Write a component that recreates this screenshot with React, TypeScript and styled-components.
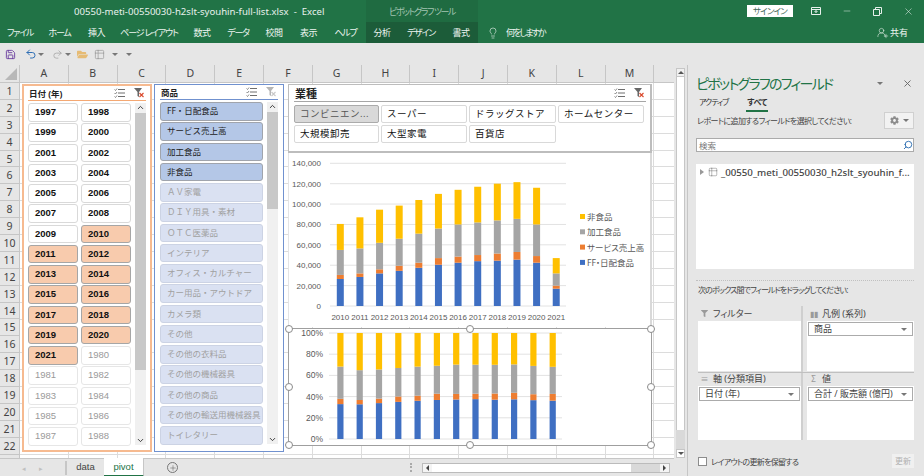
import React from 'react';
import styled, { createGlobalStyle } from 'styled-components';
import { ChevronDown, ChevronUp, Lightbulb, Minus, Redo2, Save, Search, Table2, Undo2, UserRound, X, Plus } from 'lucide-react';
import { FaCog, FaFilter, FaFolderOpen } from 'react-icons/fa';

const UI_FONT = `"Noto Sans", "Noto Sans CJK JP", sans-serif`;
const NUM_FONT = `"Liberation Sans", "Noto Sans CJK JP", sans-serif`;

const GlobalStyle = createGlobalStyle`
  html, body { margin: 0; padding: 0; background: #e6e6e6; overflow: hidden; }
  * { box-sizing: border-box; }
  body { font-family: ${UI_FONT}; font-feature-settings: "palt"; }
`;

const Window = styled.div`
  width: 924px;
  height: 476px;
  display: flex;
  flex-direction: column;
  overflow: hidden;
`;

// title bar
const TitleBar = styled.div`
  height: 22px;
  background: #217346;
  display: flex;
  align-items: center;
  color: #e8f1ec;
  position: relative;
`;

const DocTitle = styled.div`
  margin-left: 74px;
  width: 292px;
  font-size: 9.6px;
  white-space: pre;
`;

const ContextGroup = styled.div`
  width: 112px;
  height: 22px;
  background: #1f6b41;
  color: #a3c4b1;
  font-size: 9px;
  letter-spacing: -1.5px;
  display: flex;
  align-items: center;
  justify-content: center;
`;

const WindowControls = styled.div`
  margin-left: auto;
  display: flex;
  align-items: center;
  height: 22px;
`;

const SignIn = styled.div`
  width: 46px;
  height: 12px;
  background: #fff;
  color: #44695a;
  font-size: 8.5px;
  letter-spacing: -0.8px;
  line-height: 12px;
  text-align: center;
  margin-right: 7px;
`;

const WinButton = styled.div`
  width: 31px;
  display: flex;
  justify-content: center;
  color: #e8f1ec;
`;

const RibbonTabs = styled.div`
  height: 21px;
  background: #217346;
  display: flex;
  align-items: center;
  color: #eef5f1;
  font-size: 9px;
`;

const RibbonTab = styled.div<{ $w: number; $dark?: boolean; $kana?: boolean }>`
  width: ${p => p.$w}px;
  height: 21px;
  line-height: 21px;
  text-align: center;
  white-space: nowrap;
  flex: none;
  letter-spacing: ${p => (p.$kana ? -1.2 : -0.5)}px;
  background: ${p => (p.$dark ? '#1c5c39' : 'transparent')};
`;

const TellMe = styled.div`
  display: flex;
  align-items: center;
  gap: 7px;
  margin-left: 9px;
  letter-spacing: -1.9px;
`;

const Share = styled.div`
  margin-left: auto;
  margin-right: 16px;
  display: flex;
  align-items: center;
  gap: 3px;
  position: relative;
`;

const SharePlus = styled.span`
  position: absolute;
  left: 7px;
  top: 7px;
  display: flex;
`;

const Qat = styled.div`
  height: 22px;
  background: #e6e6e6;
  display: flex;
  align-items: center;
  padding-left: 5px;
`;

const QatIcon = styled.div<{ $w: number }>`
  width: ${p => p.$w}px;
  display: flex;
  align-items: center;
  color: #8a8a8a;
  flex: none;
`;

const Main = styled.div`
  flex: 1;
  display: flex;
  min-height: 0;
`;

// sheet
const SheetPane = styled.div`
  width: 687px;
  display: flex;
  flex-direction: column;
`;

const SheetTop = styled.div`
  height: 393px;
  display: flex;
`;

const SheetBody = styled.div`
  width: 674px;
  display: flex;
  flex-direction: column;
`;

const ColumnHeader = styled.div`
  height: 18px;
  display: flex;
  background: #e6e6e6;
  border-bottom: 1px solid #c6c6c6;
`;

const Corner = styled.div`
  width: 20px;
  flex: none;
  position: relative;
  border-right: 1px solid #c6c6c6;
  &::after {
    content: '';
    position: absolute;
    right: 2px;
    bottom: 2px;
    border-style: solid;
    border-width: 0 0 12px 12px;
    border-color: transparent transparent #b8b8b8 transparent;
  }
`;

const ColumnCell = styled.div`
  width: 48.8px;
  flex: none;
  text-align: center;
  font-size: 10.5px;
  line-height: 17px;
  color: #444;
  border-right: 1px solid #c6c6c6;
`;

const GridRow = styled.div`
  flex: 1;
  display: flex;
  min-height: 0;
`;

const RowHeader = styled.div`
  width: 20px;
  flex: none;
  background: #e6e6e6;
  overflow: hidden;
  border-right: 1px solid #c6c6c6;
`;

const RowCell = styled.div`
  height: 16.9px;
  line-height: 16px;
  text-align: center;
  font-size: 10.5px;
  color: #444;
  border-bottom: 1px solid #c6c6c6;
`;

const Cells = styled.div`
  flex: 1;
  position: relative;
  background-color: #fff;
  background-image:
    repeating-linear-gradient(to right, transparent 0, transparent 47.8px, #dcdcdc 47.8px, #dcdcdc 48.8px),
    repeating-linear-gradient(to bottom, transparent 0, transparent 15.9px, #dcdcdc 15.9px, #dcdcdc 16.9px);
`;

const FloatLayer = styled.div`
  position: absolute;
  left: 2px;
  top: 1px;
  display: flex;
  gap: 2px;
`;

const Slicer = styled.div<{ $accent: string; $border: number }>`
  width: 130px;
  height: 368px;
  background: #fff;
  border: ${p => p.$border}px solid ${p => p.$accent};
  padding: 0 ${p => 6 - p.$border}px;
  display: flex;
  flex-direction: column;
`;

const SlicerHead = styled.div<{ $accent: string; $big?: boolean }>`
  height: ${p => (p.$big ? 17 : 15)}px;
  flex: none;
  display: flex;
  align-items: center;
  border-bottom: 1px solid ${p => p.$accent};
  font-size: ${p => (p.$big ? 11 : 8.5)}px;
  font-weight: 700;
  color: #222;
  padding-left: 1px;
`;

const HeadTools = styled.div`
  margin-left: auto;
  display: flex;
  align-items: center;
  gap: 9px;
  padding-right: 1px;
`;

const SlicerBody = styled.div`
  flex: 1;
  display: flex;
  margin-top: 2px;
  min-height: 0;
`;

const ItemGrid = styled.div<{ $cols: number }>`
  width: 103px;
  height: 343px;
  overflow: hidden;
  display: grid;
  grid-template-columns: repeat(${p => p.$cols}, 1fr);
  grid-auto-rows: 18.5px;
  gap: 1.75px 3px;
  align-content: start;
`;

type Tone = 'off' | 'none' | 'orange' | 'blue' | 'blueNone' | 'grey';

const toneBg: Record<Tone, string> = {
  off: '#fff', none: '#fff', orange: '#f8cbad', blue: '#b4c7e7', blueNone: '#dae1f2', grey: '#d9d9d9',
};
const toneLine: Record<Tone, string> = {
  off: '#d9d9d9', none: '#e6e6e6', orange: '#a6a6a6', blue: '#a0a4ac', blueNone: '#ccd3e4', grey: '#ababab',
};
const toneText: Record<Tone, string> = {
  off: '#111', none: '#9a9a9a', orange: '#111', blue: '#222', blueNone: '#a0a0a0', grey: '#555',
};

const SlicerItem = styled.div<{ $tone: Tone; $year?: boolean }>`
  background: ${p => toneBg[p.$tone]};
  border: 1px solid ${p => toneLine[p.$tone]};
  border-radius: 3px;
  color: ${p => toneText[p.$tone]};
  font-family: ${p => (p.$year ? NUM_FONT : UI_FONT)};
  font-weight: ${p => (p.$year && p.$tone !== 'none' ? 700 : 400)};
  font-size: ${p => (p.$year ? 9.5 : 8.5)}px;
  font-feature-settings: normal;
  line-height: 16px;
  padding-left: 6px;
  white-space: nowrap;
  overflow: hidden;
`;

const SlicerScroll = styled.div`
  width: 11px;
  height: 342px;
  margin-left: 4px;
  flex: none;
  background: #f0f0f0;
  display: flex;
  flex-direction: column;
  align-items: center;
  color: #333;
`;

const ScrollThumb = styled.div<{ $h: number }>`
  width: 100%;
  height: ${p => p.$h}px;
  background: #c8c8c8;
  margin-top: 1px;
`;

const ScrollSpring = styled.div`
  flex: 1;
`;

const RightColumn = styled.div`
  width: 364px;
  margin-left: 2px;
  display: flex;
  flex-direction: column;
`;

const IndustrySlicer = styled.div`
  width: 364px;
  height: 69px;
  background: #fff;
  border: 1px solid #bdbdbd;
  border-width: 1px 2px 2px 1px;
  padding: 0 4px 0 5px;
`;

const IndustryGrid = styled.div`
  display: grid;
  grid-template-columns: 85px 86px 87px 86px;
  grid-auto-rows: 18px;
  gap: 2px 2px;
  margin-top: 3px;
`;

const IndustryItem = styled.div<{ $tone: Tone }>`
  background: ${p => toneBg[p.$tone]};
  border: 1px solid ${p => toneLine[p.$tone]};
  border-radius: 2px;
  color: ${p => toneText[p.$tone]};
  font-size: 9.5px;
  font-feature-settings: normal;
  letter-spacing: 0.5px;
  line-height: 16px;
  padding-left: 5px;
  white-space: nowrap;
  overflow: hidden;
`;

const ChartTop = styled.div`
  width: 364px;
  height: 174px;
  background: #fff;
  border-right: 2px solid #d9d9d9;
  border-left: 1px solid #e4e4e4;
`;

const ChartSelected = styled.div`
  width: 364px;
  height: 118px;
  margin-top: 1px;
  background: #fff;
  border: 1px solid #9f9f9f;
  position: relative;
`;

const Handle = styled.div<{ $x: number; $y: number }>`
  position: absolute;
  left: ${p => p.$x}%;
  top: ${p => p.$y}%;
  width: 8px;
  height: 8px;
  margin: -4px 0 0 -4px;
  border-radius: 50%;
  background: #fff;
  border: 1px solid #8a8a8a;
`;

const ChartSvg = styled.svg`
  display: block;
  font-family: ${NUM_FONT};
`;

const VScroll = styled.div`
  width: 9px;
  height: 390px;
  margin: 3px 0 0 2px;
  display: flex;
  flex-direction: column;
  background: #d9d9d9;
`;

const VArrow = styled.div`
  height: 9px;
  background: #f0f0f0;
  flex: none;
  display: flex;
  align-items: center;
  justify-content: center;
  border: 1px solid #c6c6c6;
  &::after {
    content: '';
    border-style: solid;
    border-color: #555 transparent;
    border-width: 0 3px 3px 3px;
  }
`;

const VArrowDown = styled(VArrow)`
  background: #fff;
  &::after { border-width: 3px 3px 0 3px; }
`;

const VThumb = styled.div`
  height: 353px;
  background: #fff;
  flex: none;
  border-left: 1px solid #c6c6c6;
  border-right: 1px solid #c6c6c6;
`;

// sheet tabs
const TabBar = styled.div`
  flex: 1;
  display: flex;
  align-items: stretch;
  background: #e6e6e6;
  border-top: 1px solid #c6c6c6;
  width: 674px;
  position: relative;
`;

const TabNav = styled.div`
  width: 67px;
  flex: none;
  display: flex;
  align-items: center;
  justify-content: center;
  gap: 13px;
  color: #c0c0c0;
  font-size: 7px;
  border-right: 2px solid #c6c6c6;
  margin: 2px 0;
`;

const SheetTab = styled.div<{ $active?: boolean }>`
  width: ${p => (p.$active ? 40 : 37)}px;
  text-align: center;
  font-family: ${NUM_FONT};
  font-size: 9.5px;
  line-height: 17px;
  margin-top: -1px;
  color: ${p => (p.$active ? '#217346' : '#444')};
  background: ${p => (p.$active ? '#fff' : 'transparent')};
  border-bottom: ${p => (p.$active ? '2px solid #217346' : 'none')};
  border-right: ${p => (p.$active ? '1px solid #c6c6c6' : 'none')};
`;

const AddSheet = styled.div`
  width: 11px;
  height: 11px;
  margin: 3px 0 0 23px;
  border: 1px solid #777;
  border-radius: 50%;
  color: #555;
  display: flex;
  align-items: center;
  justify-content: center;
`;

const Dots = styled.div`
  margin: 4px 0 0 232px;
  width: 1px;
  height: 9px;
  border-left: 2px dotted #aaa;
`;

const HScroll = styled.div`
  margin: 4px 0 0 10px;
  width: 248px;
  height: 10px;
  display: flex;
  background: #d9d9d9;
  border: 1px solid #bbb;
`;

const HArrow = styled.div<{ $right?: boolean }>`
  width: 9px;
  flex: none;
  background: #f4f4f4;
  display: flex;
  align-items: center;
  justify-content: center;
  ${p => (p.$right ? 'margin-left: auto;' : '')}
  &::after {
    content: '';
    border-style: solid;
    border-color: transparent #444;
    border-width: ${p => (p.$right ? '3px 0 3px 3px' : '3px 3px 3px 0')};
  }
`;

const HThumb = styled.div`
  width: 199px;
  background: #fff;
  flex: none;
`;

// field panel
const Panel = styled.aside`
  width: 237px;
  background: #e6e6e6;
  border-left: 1px solid #c6c6c6;
  padding: 0 10px 0 8px;
  display: flex;
  flex-direction: column;
`;

const PanelHead = styled.div`
  display: flex;
  align-items: center;
  height: 26px;
  margin-top: 5px;
`;

const PanelTitle = styled.div`
  color: #217346;
  font-size: 14px;
  letter-spacing: -1.7px;
  white-space: nowrap;
`;

const PanelTools = styled.div`
  margin-left: auto;
  display: flex;
  align-items: center;
  gap: 19px;
  color: #666;
  margin-right: 1px;
`;

const CaretDown = styled.span`
  display: inline-block;
  border-style: solid;
  border-color: #777 transparent;
  border-width: 3px 3.5px 0 3.5px;
`;

const PanelTabs = styled.div`
  display: flex;
  font-size: 8px;
  color: #333;
  height: 15px;
  margin-top: -1px;
`;

const PanelTab = styled.div<{ $active?: boolean }>`
  margin-left: ${p => (p.$active ? 17 : 2)}px;
  padding: 0 1px;
  height: 17px;
  letter-spacing: ${p => (p.$active ? -0.5 : -1)}px;
  font-weight: ${p => (p.$active ? 700 : 400)};
  border-bottom: ${p => (p.$active ? '2px solid #217346' : 'none')};
  line-height: 13px;
`;

const ChooseRow = styled.div`
  display: flex;
  align-items: center;
  justify-content: space-between;
  height: 17px;
  margin-top: 2px;
  font-size: 8px;
  letter-spacing: -0.6px;
  white-space: nowrap;
  color: #444;
  padding-left: 1px;
`;

const GearButton = styled.div`
  width: 30px;
  height: 17px;
  background: #f2f2f2;
  border: 1px solid #d0d0d0;
  display: flex;
  align-items: center;
  justify-content: center;
  gap: 4px;
  color: #8c8c8c;
`;

const SearchBox = styled.div`
  height: 14px;
  margin-top: 9px;
  background: #fff;
  border: 1px solid #ababab;
  font-size: 8.5px;
  line-height: 11px;
  color: #777;
  padding-left: 2px;
  display: flex;
  align-items: center;
  justify-content: space-between;
`;

const SearchMark = styled.span`
  display: flex;
  transform: scaleX(-1);
  color: #2b6cb0;
  margin-left: 1px;
`;

const FieldList = styled.div`
  height: 105px;
  margin-top: 12px;
  background: #fff;
  padding: 1px 4px;
  font-size: 9.7px;
  font-weight: 500;
  color: #444;
`;

const ExpandMark = styled.span`
  display: inline-block;
  border-style: solid;
  border-color: transparent #999;
  border-width: 3px 0 3px 4px;
  flex: none;
  margin-right: 1px;
`;

const FieldRow = styled.div`
  display: flex;
  align-items: center;
  gap: 3px;
  height: 12px;
  margin-top: 1px;
  white-space: nowrap;
`;

const Splitter = styled.div`
  margin-top: 11px;
  border-top: 1px dotted #c0c0c0;
`;

const DragHint = styled.div`
  font-size: 8px;
  letter-spacing: -0.9px;
  white-space: nowrap;
  color: #444;
  margin-top: 2px;
  height: 14px;
  line-height: 14px;
  padding-left: 2px;
`;

const AreaGrid = styled.div`
  margin-top: 9px;
  padding-left: 2px;
  display: grid;
  grid-template-columns: 103px 107px;
  grid-template-rows: 65px 69px;
  column-gap: 6px;
  position: relative;
`;

const AreaCell = styled.div`
  display: flex;
  flex-direction: column;
`;

const AreaLabel = styled.div`
  height: 15px;
  display: flex;
  align-items: center;
  gap: 5px;
  font-size: 9px;
  color: #444;
  padding-left: 3px;
`;

const AreaIcon = styled.span`
  width: 7px;
  display: flex;
  justify-content: center;
  color: #9a9a9a;
  font-size: 8px;
  line-height: 9px;
`;

const AreaBox = styled.div`
  flex: 1;
  background: #fff;
  padding: 1px;
`;

const Pill = styled.div`
  height: 14px;
  border: 1px solid #ababab;
  background: #fff;
  font-size: 9px;
  line-height: 12px;
  color: #444;
  padding: 0 5px;
  display: flex;
  align-items: center;
  justify-content: space-between;
`;

const VSplit = styled.div`
  position: absolute;
  left: 105px;
  top: 0;
  bottom: 0;
  width: 2px;
  background: #cfcfcf;
`;

const HSplit = styled.div`
  position: absolute;
  left: 2px;
  right: 0;
  top: 66px;
  height: 1px;
  background: #c0c0c0;
`;

const PanelFoot = styled.div`
  display: flex;
  align-items: center;
  margin-top: 14px;
  font-size: 8px;
  letter-spacing: -0.7px;
  color: #444;
  padding-left: 2px;
`;

const CheckBox = styled.div`
  width: 9px;
  height: 9px;
  background: #fff;
  border: 1px solid #8c8c8c;
  margin-right: 4px;
`;

const UpdateButton = styled.div`
  margin-left: auto;
  width: 22px;
  height: 14px;
  line-height: 14px;
  text-align: center;
  background: #f0f0f0;
  color: #b0b0b0;
  letter-spacing: 0;
`;

const years = [1997, 1998, 1999, 2000, 2001, 2002, 2003, 2004, 2005, 2006, 2007, 2008, 2009, 2010, 2011, 2012, 2013, 2014, 2015, 2016, 2017, 2018, 2019, 2020, 2021, 1980, 1981, 1982, 1983, 1984, 1985, 1986, 1987, 1988];

const products = ['FF・日配食品', 'サービス売上高', '加工食品', '非食品', 'ＡＶ家電', 'ＤＩＹ用具・素材', 'ＯＴＣ医薬品', 'インテリア', 'オフィス・カルチャー', 'カー用品・アウトドア', 'カメラ類', 'その他', 'その他の衣料品', 'その他の機械器具', 'その他の商品', 'その他の輸送用機械器具', 'トイレタリー'];

const industries = ['コンビニエン...', 'スーパー', 'ドラッグストア', 'ホームセンター', '大規模卸売', '大型家電', '百貨店'];

const ribbon: { name: string; w: number; kana?: boolean; dark?: boolean }[] = [
  { name: 'ファイル', w: 40, kana: true },
  { name: 'ホーム', w: 39, kana: true },
  { name: '挿入', w: 35 },
  { name: 'ページ レイアウト', w: 70, kana: true },
  { name: '数式', w: 36 },
  { name: 'データ', w: 36, kana: true },
  { name: '校閲', w: 36 },
  { name: '表示', w: 33 },
  { name: 'ヘルプ', w: 41, kana: true },
  { name: '分析', w: 32, dark: true },
  { name: 'デザイン', w: 46, kana: true, dark: true },
  { name: '書式', w: 34, dark: true },
];

const COLORS = ['#3f6fc2', '#ed7d31', '#a5a5a5', '#ffc000'];
const SERIES_NAMES = ['FF・日配食品', 'サービス売上高', '加工食品', '非食品'];

// cumulative tops per year, in thousands
const stacks = [
  [26.5, 30.5, 55, 80.5], [28.5, 32, 56.5, 87], [32, 36, 62, 94.5], [34.5, 39.5, 66, 98.5],
  [37.5, 42.5, 71, 104], [40.5, 47, 76, 110], [42.5, 48.5, 80, 114], [44, 50, 82, 117],
  [44.5, 51.5, 84, 120], [45.5, 53, 85.5, 121.5], [42.5, 49, 80, 116], [17, 20, 32, 47],
];

const AbsoluteChart = () => {
  const base = 153;
  const unit = 142.7 / 140;
  return (
    <ChartSvg width={361} height={174}>
      {[0, 20, 40, 60, 80, 100, 120, 140].map(v => {
        const y = base - v * unit;
        return (
          <g key={v}>
            <line x1={41} x2={277} y1={y} y2={y} stroke="#e2e2e2" strokeWidth={1} />
            <text x={32} y={y + 3} textAnchor="end" fontSize={8} fill="#595959">
              {v === 0 ? '0' : `${v},000`}
            </text>
          </g>
        );
      })}
      {stacks.map((s, i) => {
        const x = 47.8 + i * 19.63;
        return (
          <g key={i}>
            {s.map((top, k) => {
              const from = k === 0 ? 0 : s[k - 1];
              return <rect key={k} x={x} width={7} y={base - top * unit} height={(top - from) * unit} fill={COLORS[k]} />;
            })}
            <text x={x + 3.5} y={167} textAnchor="middle" fontSize={8} fill="#595959">{2010 + i}</text>
          </g>
        );
      })}
      {[3, 2, 1, 0].map((k, i) => (
        <g key={k}>
          <rect x={291} y={61 + i * 15.3} width={5} height={5} fill={COLORS[k]} />
          <text x={298} y={67 + i * 15.3} fontSize={8.5} fill="#595959" fontFamily={UI_FONT}>{SERIES_NAMES[k]}</text>
        </g>
      ))}
    </ChartSvg>
  );
};

const PercentChart = () => {
  const base = 110;
  const unit = 1.06;
  return (
    <ChartSvg width={362} height={116}>
      {[0, 20, 40, 60, 80, 100].map(v => {
        const y = base - v * unit;
        return (
          <g key={v}>
            <line x1={40} x2={273} y1={y} y2={y} stroke="#e2e2e2" strokeWidth={1} />
            <text x={34} y={y + 3} textAnchor="end" fontSize={8.5} fill="#595959">{v}%</text>
          </g>
        );
      })}
      {stacks.map((s, i) => {
        const x = 48.3 + i * 19.3;
        const total = s[3];
        return (
          <g key={i}>
            {s.map((top, k) => {
              const from = k === 0 ? 0 : s[k - 1];
              return <rect key={k} x={x} width={6.2} y={base - (top / total) * 100 * unit} height={((top - from) / total) * 100 * unit} fill={COLORS[k]} />;
            })}
          </g>
        );
      })}
    </ChartSvg>
  );
};

const ListIcon = () => (
  <svg width="11" height="10" viewBox="0 0 11 10" fill="none" stroke="#6e6e6e" strokeWidth="1">
    <path d="M4 1.5h7M4 5h7M4 8.5h7" />
    <path d="M0.5 1.5l1 1 1.5-2M0.5 5l1 1 1.5-2M0.5 8.5l1 1 1.5-2" strokeWidth="0.8" />
  </svg>
);

const ClearIcon = ({ off }: { off?: boolean }) => (
  <svg width="11" height="10" viewBox="0 0 11 10" fill="none">
    <path d="M0 0h8L5 4v5L3.5 8V4z" fill={off ? '#b5b5b5' : '#666'} />
    <path d="M5.5 5l4 4M9.5 5l-4 4" stroke={off ? '#c8c8c8' : '#d9482b'} strokeWidth="1.1" />
  </svg>
);

const Tools = ({ off }: { off?: boolean }) => (
  <HeadTools>
    <ListIcon />
    <ClearIcon off={off} />
  </HeadTools>
);

const Scroll = ({ thumb }: { thumb: number }) => (
  <SlicerScroll>
    <ChevronUp size={9} strokeWidth={2.5} />
    <ScrollThumb $h={thumb} />
    <ScrollSpring />
    <ChevronDown size={9} strokeWidth={2.5} />
  </SlicerScroll>
);

const yearTone = (y: number): Tone => {
  if (y >= 2010) return 'orange';
  if (y >= 1997) return 'off';
  return 'none';
};

const RibbonBar = () => (
  <RibbonTabs>
    {ribbon.map(t => (
      <RibbonTab key={t.name} $w={t.w} $dark={t.dark} $kana={t.kana}>{t.name}</RibbonTab>
    ))}
    <TellMe>
      <Lightbulb size={12} strokeWidth={1.2} />
      何をしますか
    </TellMe>
    <Share>
      <UserRound size={11} strokeWidth={1.2} />
      <SharePlus><Plus size={6} strokeWidth={2} /></SharePlus>
      共有
    </Share>
  </RibbonTabs>
);

const QuickAccess = () => (
  <Qat>
    <QatIcon $w={20}><Save size={11} color="#6b3fa0" strokeWidth={2} /></QatIcon>
    <QatIcon $w={13}><Undo2 size={12} color="#2f6fb5" strokeWidth={2} /></QatIcon>
    <QatIcon $w={14}><CaretDown /></QatIcon>
    <QatIcon $w={13}><Redo2 size={11} color="#a8a8a8" strokeWidth={1.8} /></QatIcon>
    <QatIcon $w={12}><CaretDown /></QatIcon>
    <QatIcon $w={17}><FaFolderOpen size={11} color="#e6bb74" /></QatIcon>
    <QatIcon $w={18}><Table2 size={11} color="#9b9b9b" strokeWidth={1.6} /></QatIcon>
    <QatIcon $w={14}><CaretDown /></QatIcon>
    <QatIcon $w={8}><CaretDown /></QatIcon>
  </Qat>
);

const FieldPanel = () => (
  <Panel>
    <PanelHead>
      <PanelTitle>ピボットグラフのフィールド</PanelTitle>
      <PanelTools>
        <CaretDown />
        <X size={11} strokeWidth={2} />
      </PanelTools>
    </PanelHead>
    <PanelTabs>
      <PanelTab>アクティブ</PanelTab>
      <PanelTab $active>すべて</PanelTab>
    </PanelTabs>
    <ChooseRow>
      レポートに追加するフィールドを選択してください:
      <GearButton><FaCog size={9} /><CaretDown /></GearButton>
    </ChooseRow>
    <SearchBox>
      検索
      <SearchMark><Search size={10} strokeWidth={2.2} /></SearchMark>
    </SearchBox>
    <FieldList>
      <FieldRow>
        <ExpandMark />
        <Table2 size={10} color="#777" strokeWidth={1.2} />
        _00550_meti_00550030_h2slt_syouhin_f...
      </FieldRow>
    </FieldList>
    <Splitter />
    <DragHint>次のボックス間でフィールドをドラッグしてください:</DragHint>
    <AreaGrid>
      <AreaCell>
        <AreaLabel><AreaIcon><FaFilter size={7} /></AreaIcon>フィルター</AreaLabel>
        <AreaBox />
      </AreaCell>
      <AreaCell>
        <AreaLabel><AreaIcon>▮▮</AreaIcon>凡例 (系列)</AreaLabel>
        <AreaBox><Pill>商品<CaretDown /></Pill></AreaBox>
      </AreaCell>
      <AreaCell>
        <AreaLabel><AreaIcon>≡</AreaIcon>軸 (分類項目)</AreaLabel>
        <AreaBox><Pill>日付 (年)<CaretDown /></Pill></AreaBox>
      </AreaCell>
      <AreaCell>
        <AreaLabel><AreaIcon>Σ</AreaIcon>値</AreaLabel>
        <AreaBox><Pill>合計 / 販売額 (億円)<CaretDown /></Pill></AreaBox>
      </AreaCell>
      <VSplit />
      <HSplit />
    </AreaGrid>
    <PanelFoot>
      <CheckBox />
      レイアウトの更新を保留する
      <UpdateButton>更新</UpdateButton>
    </PanelFoot>
  </Panel>
);

const handles: [number, number][] = [[0, 0], [50, 0], [100, 0], [0, 50], [100, 50], [0, 100], [50, 100], [100, 100]];

export default function App() {
  return (
    <Window>
      <GlobalStyle />
      <TitleBar>
        <DocTitle>00550-meti-00550030-h2slt-syouhin-full-list.xlsx  -  Excel</DocTitle>
        <ContextGroup>ピボットグラフ ツール</ContextGroup>
        <WindowControls>
          <SignIn>サインイン</SignIn>
          <WinButton>
            <svg width="10" height="8" viewBox="0 0 10 8" fill="none" stroke="currentColor"><path d="M.5.5h9v7h-9zM.5 2.5h9M5 2.5v3M3.5 4L5 5.5 6.5 4" /></svg>
          </WinButton>
          <WinButton><Minus size={10} strokeWidth={1.2} /></WinButton>
          <WinButton>
            <svg width="9" height="9" viewBox="0 0 9 9" fill="none" stroke="currentColor"><path d="M.5 2.5h6v6h-6zM2.5 2.5v-2h6v6h-2" /></svg>
          </WinButton>
          <WinButton><X size={11} strokeWidth={1.2} /></WinButton>
        </WindowControls>
      </TitleBar>
      <RibbonBar />
      <QuickAccess />
      <Main>
        <SheetPane>
          <SheetTop>
            <SheetBody>
              <ColumnHeader>
                <Corner />
                {'ABCDEFGHIJKLM'.split('').map(c => <ColumnCell key={c}>{c}</ColumnCell>)}
              </ColumnHeader>
              <GridRow>
                <RowHeader>
                  {Array.from({ length: 23 }, (_, i) => <RowCell key={i}>{i < 22 ? i + 1 : ''}</RowCell>)}
                </RowHeader>
                <Cells>
                  <FloatLayer>
                    <Slicer $accent="#f6ba90" $border={2}>
                      <SlicerHead $accent="#f4a873">日付 (年)<Tools /></SlicerHead>
                      <SlicerBody>
                        <ItemGrid $cols={2}>
                          {years.map(y => <SlicerItem key={y} $tone={yearTone(y)} $year>{y}</SlicerItem>)}
                        </ItemGrid>
                        <Scroll thumb={257} />
                      </SlicerBody>
                    </Slicer>
                    <Slicer $accent="#7091cf" $border={1}>
                      <SlicerHead $accent="#7091cf">商品<Tools off /></SlicerHead>
                      <SlicerBody>
                        <ItemGrid $cols={1}>
                          {products.map((name, i) => <SlicerItem key={name} $tone={i < 4 ? 'blue' : 'blueNone'}>{name}</SlicerItem>)}
                        </ItemGrid>
                        <Scroll thumb={97} />
                      </SlicerBody>
                    </Slicer>
                    <RightColumn>
                      <IndustrySlicer>
                        <SlicerHead $accent="#a6a6a6" $big>業種<Tools /></SlicerHead>
                        <IndustryGrid>
                          {industries.map((name, i) => <IndustryItem key={name} $tone={i === 0 ? 'grey' : 'off'}>{name}</IndustryItem>)}
                        </IndustryGrid>
                      </IndustrySlicer>
                      <ChartTop><AbsoluteChart /></ChartTop>
                      <ChartSelected>
                        <PercentChart />
                        {handles.map(([x, y]) => <Handle key={`${x}-${y}`} $x={x} $y={y} />)}
                      </ChartSelected>
                    </RightColumn>
                  </FloatLayer>
                </Cells>
              </GridRow>
            </SheetBody>
            <VScroll>
              <VArrow />
              <VThumb />
              <ScrollSpring />
              <VArrowDown />
            </VScroll>
          </SheetTop>
          <TabBar>
            <TabNav><span>◂</span><span>▸</span></TabNav>
            <SheetTab>data</SheetTab>
            <SheetTab $active>pivot</SheetTab>
            <AddSheet><Plus size={8} strokeWidth={1.5} /></AddSheet>
            <Dots />
            <HScroll>
              <HArrow />
              <HThumb />
              <HArrow $right />
            </HScroll>
          </TabBar>
        </SheetPane>
        <FieldPanel />
      </Main>
    </Window>
  );
}
